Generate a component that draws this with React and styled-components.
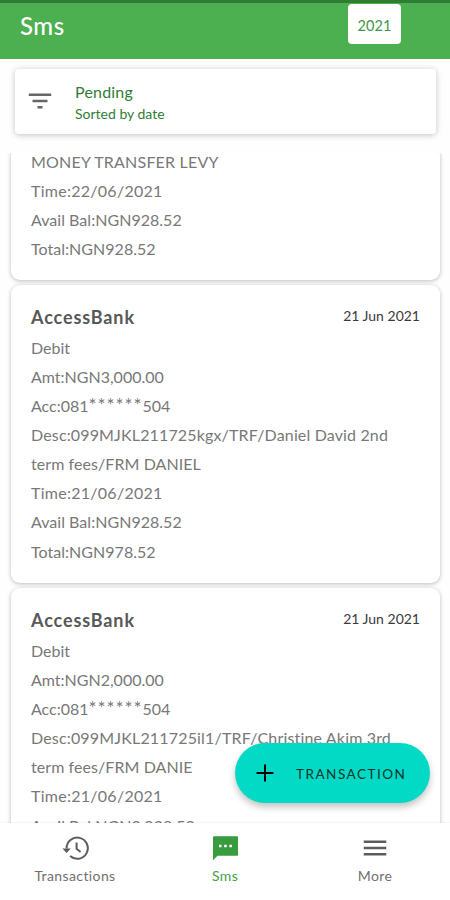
import React from 'react';
import styled, { createGlobalStyle } from 'styled-components';
import { MdFilterList, MdMenu } from 'react-icons/md';

const GlobalStyle = createGlobalStyle`
  * {
    box-sizing: border-box;
  }

  body {
    margin: 0;
    background: #fff;
    font-family: Lato, 'Noto Sans', sans-serif;
  }
`;

const Screen = styled.div`
  display: flex;
  flex-direction: column;
  position: relative;
  width: 450px;
  height: 900px;
  overflow: hidden;
  background: #fefefe;
`;

const Header = styled.header`
  display: flex;
  flex: none;
  justify-content: space-between;
  align-items: flex-start;
  height: 59px;
  padding: 1px 49px 0 20px;
  border-top: 3px solid #2e7d32;
  background: #4caf50;
`;

const PageTitle = styled.h1`
  margin: 0;
  color: #fff;
  font-size: 24px;
  font-weight: 500;
  line-height: 43px;
  letter-spacing: 0.5px;
`;

const Year = styled.button`
  width: 53px;
  height: 40px;
  padding: 2px 0 0;
  border: 0;
  border-radius: 4px;
  background: #fff;
  color: #43964a;
  font-family: inherit;
  font-size: 14.5px;
  letter-spacing: 0.1px;
`;

const Filter = styled.section`
  display: flex;
  flex: none;
  align-items: center;
  height: 65px;
  margin: 10px 14px 0 15px;
  padding: 0 0 1px 10px;
  border-radius: 4px;
  background: #fff;
  box-shadow: 0 1px 6px rgba(0, 0, 0, 0.24);
`;

const FilterIcon = styled(MdFilterList)`
  color: #666;
  font-size: 30px;
`;

const FilterText = styled.div`
  margin: 2px 0 0 20px;
  color: #2f7d38;
`;

const FilterName = styled.div`
  font-size: 16px;
  line-height: 23px;
  letter-spacing: 0.2px;
`;

const FilterSort = styled.div`
  font-size: 14px;
  line-height: 21px;
`;

const List = styled.main`
  flex: 1;
  min-height: 0;
  margin-top: 19px;
  padding: 0 10px 0 11px;
  overflow: hidden;
`;

const Card = styled.article`
  margin-top: ${props => (props.$clipped ? '-6px' : 0)};
  margin-bottom: 5px;
  padding: ${props => (props.$clipped ? '0 20px 16px' : '16px 20px 17px')};
  border-radius: 9px;
  background: #fff;
  box-shadow: 0 1px 4px rgba(0, 0, 0, 0.27);
`;

const CardHead = styled.div`
  display: flex;
  justify-content: space-between;
  height: 32px;
  line-height: 32px;
`;

const Bank = styled.h2`
  margin: 0;
  color: #585858;
  font-size: 18px;
  font-weight: 700;
  letter-spacing: 0.88px;
`;

const CardDate = styled.span`
  color: #3a3a3a;
  font-size: 14px;
  line-height: 30px;
`;

const Line = styled.div`
  height: 29.15px;
  color: #787878;
  font-size: 16px;
  line-height: 29.15px;
  letter-spacing: ${props => props.$spacing || 0}px;
  white-space: nowrap;
`;

const Mask = styled.span`
  font-size: 19px;
  letter-spacing: 0.9px;
  line-height: 1;
`;

const Fab = styled.button`
  display: flex;
  position: absolute;
  right: 20px;
  bottom: 97px;
  align-items: center;
  width: 195px;
  height: 60px;
  padding: 0 0 0 15px;
  border: 0;
  border-radius: 30px;
  background: #03dac5;
  box-shadow: 0 4px 7px rgba(0, 0, 0, 0.24);
  color: #06332f;
  font-family: inherit;
  font-size: 13.5px;
  letter-spacing: 1.5px;

  svg {
    margin-right: 16px;
    color: #000;
  }
`;

const FabLabel = styled.span`
  padding-top: 2px;
`;

const Nav = styled.nav`
  display: flex;
  flex: none;
  height: 77px;
  background: #fff;
  box-shadow: 0 -1px 1px rgba(0, 0, 0, 0.03);
`;

const Tab = styled.a`
  display: flex;
  flex: 1;
  flex-direction: column;
  align-items: center;
  padding-top: 10px;
  color: ${props => (props.$active ? '#43a047' : '#707070')};
  font-size: 14px;
  line-height: 20px;
  letter-spacing: 0.4px;

  svg {
    margin-bottom: 3px;
    color: ${props => (props.$active ? '#389b3e' : '#5c5c5c')};
    font-size: 30px;
  }
`;

const PlusIcon = () => (
  <svg width="30" height="30" viewBox="0 0 30 30" fill="none" stroke="currentColor" strokeWidth="2">
    <path d="M15 6.5v17M6.5 15h17" />
  </svg>
);

const HistoryIcon = () => (
  <svg width="30" height="30" viewBox="0 0 30 30" fill="none" stroke="currentColor" strokeWidth="2">
    <path d="M6.6 15.5a10.6 10.6 0 1 1 3.5 7.6M16.6 9.5v6.3l4 3.2" />
    <path d="M2.4 15.5h8.4l-4.2 4.6z" fill="currentColor" stroke="none" />
  </svg>
);

const SmsIcon = () => (
  <svg width="30" height="30" viewBox="0 0 30 30">
    <path d="M3.8 3.2h23.4a.8.8 0 0 1 .8.8v18a.8.8 0 0 1-.8.8H7.5L3 27.2V4a.8.8 0 0 1 .8-.8z" fill="currentColor" />
    <path d="M9 11.8h2.5v2.5H9zM14.2 11.8h2.5v2.5h-2.5zM19.4 11.8h2.5v2.5h-2.5z" fill="#fff" />
  </svg>
);

const messages = [
  {
    id: 1,
    clipped: true,
    lines: [
      { text: 'MONEY TRANSFER LEVY', spacing: 0.19 },
      { text: 'Time:22/06/2021', spacing: 0.27 },
      { text: 'Avail Bal:NGN928.52', spacing: 0.03 },
      { text: 'Total:NGN928.52', spacing: 0.03 },
    ],
  },
  {
    id: 2,
    lines: [
      { text: 'Debit' },
      { text: 'Amt:NGN3,000.00' },
      { text: 'Acc:081', mask: '******', end: '504' },
      { text: 'Desc:099MJKL211725kgx/TRF/Daniel David 2nd', spacing: 0.15 },
      { text: 'term fees/FRM DANIEL', spacing: 0.07 },
      { text: 'Time:21/06/2021', spacing: 0.27 },
      { text: 'Avail Bal:NGN928.52', spacing: 0.03 },
      { text: 'Total:NGN978.52', spacing: 0.03 },
    ],
  },
  {
    id: 3,
    lines: [
      { text: 'Debit' },
      { text: 'Amt:NGN2,000.00' },
      { text: 'Acc:081', mask: '******', end: '504' },
      { text: 'Desc:099MJKL211725il1/TRF/Christine Akim 3rd', spacing: 0.17 },
      { text: 'term fees/FRM DANIE', spacing: 0.07 },
      { text: 'Time:21/06/2021', spacing: 0.27 },
      { text: 'Avail Bal:NGN3,928.52', spacing: 0.03 },
    ],
  },
];

function renderLine({ text, mask, end, spacing }) {
  return (
    <Line key={text} $spacing={spacing}>
      {text}
      {mask && <Mask>{mask}</Mask>}
      {end}
    </Line>
  );
}

function renderMessage({ id, clipped, lines }) {
  return (
    <Card key={id} $clipped={clipped}>
      {!clipped && (
        <CardHead>
          <Bank>AccessBank</Bank>
          <CardDate>21 Jun 2021</CardDate>
        </CardHead>
      )}
      {lines.map(renderLine)}
    </Card>
  );
}

export default () => (
  <Screen>
    <GlobalStyle />
    <Header>
      <PageTitle>Sms</PageTitle>
      <Year>2021</Year>
    </Header>
    <Filter>
      <FilterIcon />
      <FilterText>
        <FilterName>Pending</FilterName>
        <FilterSort>Sorted by date</FilterSort>
      </FilterText>
    </Filter>
    <List>
      { messages.map(renderMessage) }
    </List>
    <Fab>
      <PlusIcon />
      <FabLabel>TRANSACTION</FabLabel>
    </Fab>
    <Nav>
      <Tab><HistoryIcon />Transactions</Tab>
      <Tab $active><SmsIcon />Sms</Tab>
      <Tab><MdMenu />More</Tab>
    </Nav>
  </Screen>
);
